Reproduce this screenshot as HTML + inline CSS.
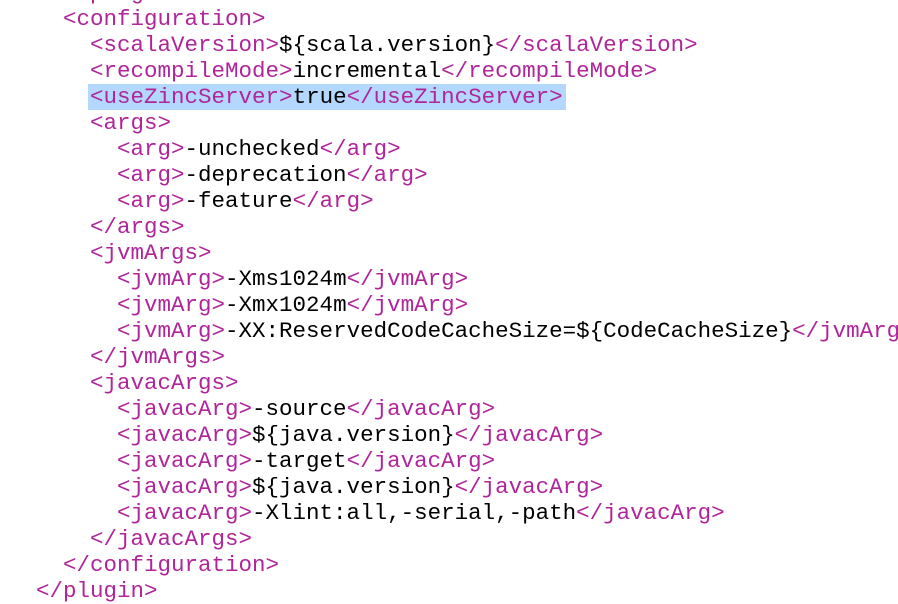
<!DOCTYPE html>
<html><head><meta charset="utf-8"><style>
html,body{margin:0;padding:0;width:898px;height:584px;overflow:hidden;background:#fff;}
pre{position:absolute;left:36px;top:-20px;margin:0;font-family:"Liberation Mono",monospace;font-size:22.5px;line-height:26px;color:#000;}
.t{color:#b0259a;}
.h{background:#b4d7fe;display:inline-block;margin-left:-2px;padding-left:2px;padding-right:3px;}
</style></head><body>
<pre><span class="t">  &lt;/plugin&gt;</span>
  <span class="t">&lt;configuration&gt;</span>
    <span class="t">&lt;scalaVersion&gt;</span>${scala.version}<span class="t">&lt;/scalaVersion&gt;</span>
    <span class="t">&lt;recompileMode&gt;</span>incremental<span class="t">&lt;/recompileMode&gt;</span>
    <span class="h"><span class="t">&lt;useZincServer&gt;</span>true<span class="t">&lt;/useZincServer&gt;</span></span>
    <span class="t">&lt;args&gt;</span>
      <span class="t">&lt;arg&gt;</span>-unchecked<span class="t">&lt;/arg&gt;</span>
      <span class="t">&lt;arg&gt;</span>-deprecation<span class="t">&lt;/arg&gt;</span>
      <span class="t">&lt;arg&gt;</span>-feature<span class="t">&lt;/arg&gt;</span>
    <span class="t">&lt;/args&gt;</span>
    <span class="t">&lt;jvmArgs&gt;</span>
      <span class="t">&lt;jvmArg&gt;</span>-Xms1024m<span class="t">&lt;/jvmArg&gt;</span>
      <span class="t">&lt;jvmArg&gt;</span>-Xmx1024m<span class="t">&lt;/jvmArg&gt;</span>
      <span class="t">&lt;jvmArg&gt;</span>-XX:ReservedCodeCacheSize=${CodeCacheSize}<span class="t">&lt;/jvmArg&gt;</span>
    <span class="t">&lt;/jvmArgs&gt;</span>
    <span class="t">&lt;javacArgs&gt;</span>
      <span class="t">&lt;javacArg&gt;</span>-source<span class="t">&lt;/javacArg&gt;</span>
      <span class="t">&lt;javacArg&gt;</span>${java.version}<span class="t">&lt;/javacArg&gt;</span>
      <span class="t">&lt;javacArg&gt;</span>-target<span class="t">&lt;/javacArg&gt;</span>
      <span class="t">&lt;javacArg&gt;</span>${java.version}<span class="t">&lt;/javacArg&gt;</span>
      <span class="t">&lt;javacArg&gt;</span>-Xlint:all,-serial,-path<span class="t">&lt;/javacArg&gt;</span>
    <span class="t">&lt;/javacArgs&gt;</span>
  <span class="t">&lt;/configuration&gt;</span>
<span class="t">&lt;/plugin&gt;</span></pre>
</body></html>
